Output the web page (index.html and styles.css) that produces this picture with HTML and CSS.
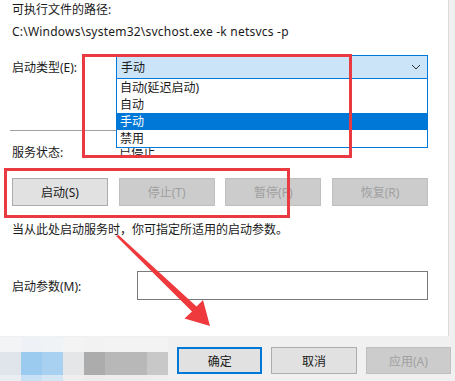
FILE: index.html
```html
<!DOCTYPE html>
<html lang="zh-CN">

<head>
    <meta charset="UTF-8">
    <title>服务属性</title>
    <link rel="stylesheet" href="styles.css">
</head>

<body>

    <div class="panel">
        <!-- path of the executable -->
        <div class="line">可执行文件的路径:</div>
        <div class="line path">C:\Windows\system32\svchost.exe -k netsvcs -p</div>

        <div class="type-row">
            <span class="row-label">启动类型(E):</span>
            <div class="combo">
                <span>手动</span>
                <svg class="chev" width="10" height="6" viewBox="0 0 10 6"><path d="M1 1 L5 5 L9 1" fill="none" stroke="#333" stroke-width="1"/></svg>
            </div>
        </div>

        <div class="sep"></div>

        <div class="line status-row">
            <span class="row-label">服务状态:</span>
            <span>已停止</span>
        </div>

        <div class="btn-row">
            <button class="btn">启动(S)</button>
            <button class="btn" disabled>停止(T)</button>
            <button class="btn" disabled>暂停(P)</button>
            <button class="btn" disabled>恢复(R)</button>
        </div>

        <div class="line hint">当从此处启动服务时，你可指定所适用的启动参数。</div>

        <div class="param-row">
            <span class="param-label">启动参数(M):</span>
            <div class="param-input"></div>
        </div>

        <!-- open dropdown list, lies over the rows below -->
        <ul class="drop-list">
            <li>自动(延迟启动)</li>
            <li>自动</li>
            <li class="picked">手动</li>
            <li>禁用</li>
        </ul>
    </div>

    <div class="footer">
        <div class="mosaic">
            <div class="m-col"><i style="background:#f2f4f6"></i><i style="background:#dfe5ea"></i><i style="background:#eaeef2"></i></div>
            <div class="m-col"><i style="background:#eef2f6"></i><i style="background:#9ccbf0"></i><i style="background:#c8e0f4"></i></div>
            <div class="m-col"><i style="background:#f0f3f6"></i><i style="background:#a8d0f0"></i><i style="background:#d4e6f4"></i></div>
            <div class="m-col"><i style="background:#f4f4f4"></i><i style="background:#e4e6e8"></i><i style="background:#eeeeee"></i></div>
            <div class="m-col"><i style="background:#f2f2f2"></i><i style="background:#acacac"></i><i style="background:#ececec"></i></div>
            <div class="m-col wide"><i style="background:#f3f3f3"></i><i style="background:#b8b8b8"></i><i style="background:#ededed"></i></div>
            <div class="m-col"><i style="background:#f3f3f3"></i><i style="background:#c8c8c8"></i><i style="background:#eeeeee"></i></div>
        </div>
        <button class="btn default">确定</button>
        <button class="btn">取消</button>
        <button class="btn" disabled>应用(A)</button>
    </div>

    <!-- annotations drawn over the screenshot -->
    <div class="mark mark-1"></div>
    <div class="mark mark-2"></div>
    <svg class="arrow" width="455" height="381" viewBox="0 0 455 381">
        <path d="M116 236 L118.5 235 L196.5 306.5 L203 300 L210 326 L184.5 318.5 L192 311.5 Z" fill="#ee3a3c"/>
    </svg>

</body>

</html>
```

FILE: styles.css
```css
body {
    margin: 0;
    width: 455px;
    height: 381px;
    overflow: hidden;
    background: #f0f0f0;
    font-family: "Noto Sans", "Noto Sans CJK SC", sans-serif;
    font-size: 12px;
    color: #1a1a1a;
    position: relative;
}

.panel {
    position: relative;
    box-sizing: border-box;
    width: 449px;
    height: 336px;
    padding: 2px 0 0 12px;
    background: #ffffff;
    border-right: 1px solid #dcdcdc;
}

.line {
    height: 16px;
    line-height: 16px;
    white-space: nowrap;
}

.path {
    margin-top: 6px;
    letter-spacing: 0.22px;
}

.type-row {
    display: flex;
    align-items: center;
    margin-top: 15px;
    height: 24px;
}

.row-label {
    display: inline-block;
    width: 104px;
}

.combo {
    box-sizing: border-box;
    width: 312px;
    height: 24px;
    display: flex;
    align-items: center;
    justify-content: space-between;
    padding: 0 6px 0 4px;
    background: #cce4f7;
    border: 1px solid #0078d7;
}

.sep {
    margin: 51px 0 0 -2px;
    width: 416px;
    height: 1px;
    background: #a0a0a0;
}

.status-row {
    margin-top: 14px;
}

.btn-row {
    display: flex;
    justify-content: space-between;
    width: 416px;
    margin-top: 17px;
}

.btn {
    box-sizing: border-box;
    width: 96px;
    height: 28px;
    padding: 0;
    background: #e1e1e1;
    border: 1px solid #adadad;
    font-family: inherit;
    font-size: 12px;
    color: #1a1a1a;
}

.btn:disabled {
    background: #cccccc;
    border-color: #bfbfbf;
    color: #a0a0a0;
}

.hint {
    margin-top: 16px;
}

.param-row {
    display: flex;
    align-items: center;
    margin-top: 33px;
}

.param-label {
    width: 125px;
}

.param-input {
    box-sizing: border-box;
    width: 291px;
    height: 29px;
    border: 1px solid #7a7a7a;
}

.drop-list {
    position: absolute;
    left: 116px;
    top: 79px;
    box-sizing: border-box;
    width: 312px;
    height: 69px;
    margin: 0;
    padding: 0;
    list-style: none;
    background: #ffffff;
    border: 1px solid #0078d7;
    border-top: none;
}

.drop-list li {
    height: 17px;
    line-height: 17px;
    padding-left: 3px;
}

.drop-list .picked {
    background: #0078d7;
    color: #ffffff;
}

.footer {
    display: flex;
    align-items: flex-start;
    gap: 9px;
    height: 45px;
    padding: 11px 4px 0 0;
    box-sizing: border-box;
}

.footer .btn {
    width: 86px;
    height: 27px;
}

.footer .default {
    border: 2px solid #0078d7;
}

.mosaic {
    display: flex;
    margin: -10px auto 0 0;
}

.m-col {
    display: flex;
    flex-direction: column;
    width: 21px;
}

.m-col.wide {
    width: 42px;
}

.m-col i {
    height: 15px;
}

.m-col i:nth-child(2) {
    height: 23px;
}

.m-col i:nth-child(3) {
    height: 8px;
}

.mark {
    position: absolute;
    border: 3px solid #e83a40;
}

.mark-1 {
    left: 82px;
    top: 54px;
    width: 264px;
    height: 98px;
}

.mark-2 {
    left: 4px;
    top: 168px;
    width: 280px;
    height: 44px;
}

.arrow {
    position: absolute;
    left: 0;
    top: 0;
}
```
